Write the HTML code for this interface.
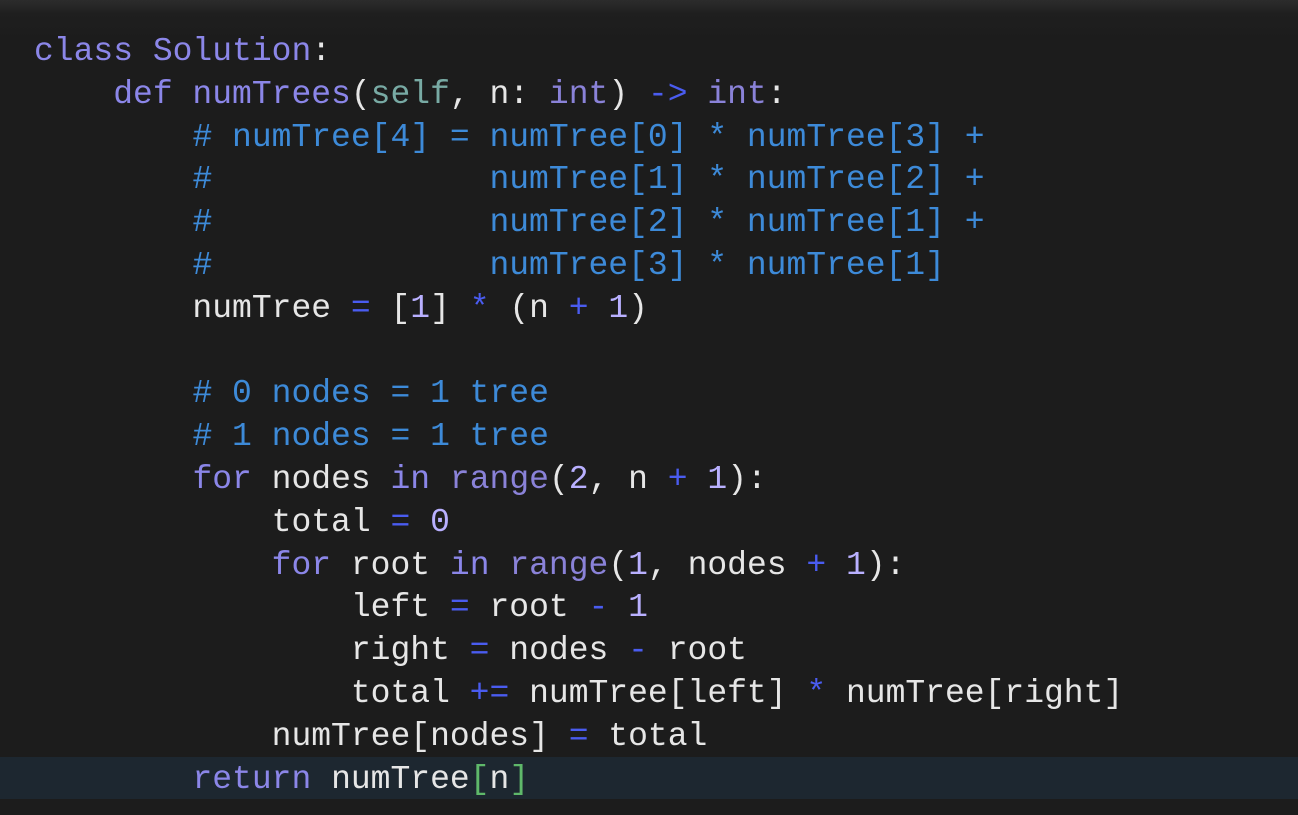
<!DOCTYPE html>
<html><head><style>
html,body{margin:0;padding:0;}
body{width:1298px;height:815px;background:#1c1c1c;overflow:hidden;position:relative;
background:linear-gradient(#2c2c2c 0px,#1f1f1f 14px,#1c1c1c 40px);}
.hl{position:absolute;left:0;top:757px;width:1298px;height:42px;background:#1d2730;}
pre{position:absolute;left:34px;top:31px;margin:0;font-family:"Liberation Mono",monospace;font-size:33px;line-height:42.8px;color:#e6e6e6;letter-spacing:0px;}
.k{color:#8b86e8}.c{color:#3d8ad8}.s{color:#78aaa4}.o{color:#4a5cf0}.n{color:#b9b0ff}.b{color:#5fb86a}.t{color:#8a82d8}
.p{display:inline-block;width:297px}
</style></head><body>
<div class="hl"></div>
<pre><span class="k">class Solution</span>:
    <span class="k">def numTrees</span>(<span class="s">self</span>, n: <span class="t">int</span>) <span class="o">-&gt;</span> <span class="t">int</span>:
        <span class="c"># numTree[4] = numTree[0] * numTree[3] +</span>
        <span class="c"><span class="p">#</span>numTree[1] * numTree[2] +</span>
        <span class="c"><span class="p">#</span>numTree[2] * numTree[1] +</span>
        <span class="c"><span class="p">#</span>numTree[3] * numTree[1]</span>
        numTree <span class="o">=</span> [<span class="n">1</span>] <span class="o">*</span> (n <span class="o">+</span> <span class="n">1</span>)

        <span class="c"># 0 nodes = 1 tree</span>
        <span class="c"># 1 nodes = 1 tree</span>
        <span class="k">for</span> nodes <span class="k">in</span> <span class="t">range</span>(<span class="n">2</span>, n <span class="o">+</span> <span class="n">1</span>):
            total <span class="o">=</span> <span class="n">0</span>
            <span class="k">for</span> root <span class="k">in</span> <span class="t">range</span>(<span class="n">1</span>, nodes <span class="o">+</span> <span class="n">1</span>):
                left <span class="o">=</span> root <span class="o">-</span> <span class="n">1</span>
                right <span class="o">=</span> nodes <span class="o">-</span> root
                total <span class="o">+=</span> numTree[left] <span class="o">*</span> numTree[right]
            numTree[nodes] <span class="o">=</span> total
        <span class="k">return</span> numTree<span class="b">[</span>n<span class="b">]</span></pre>
</body></html>
